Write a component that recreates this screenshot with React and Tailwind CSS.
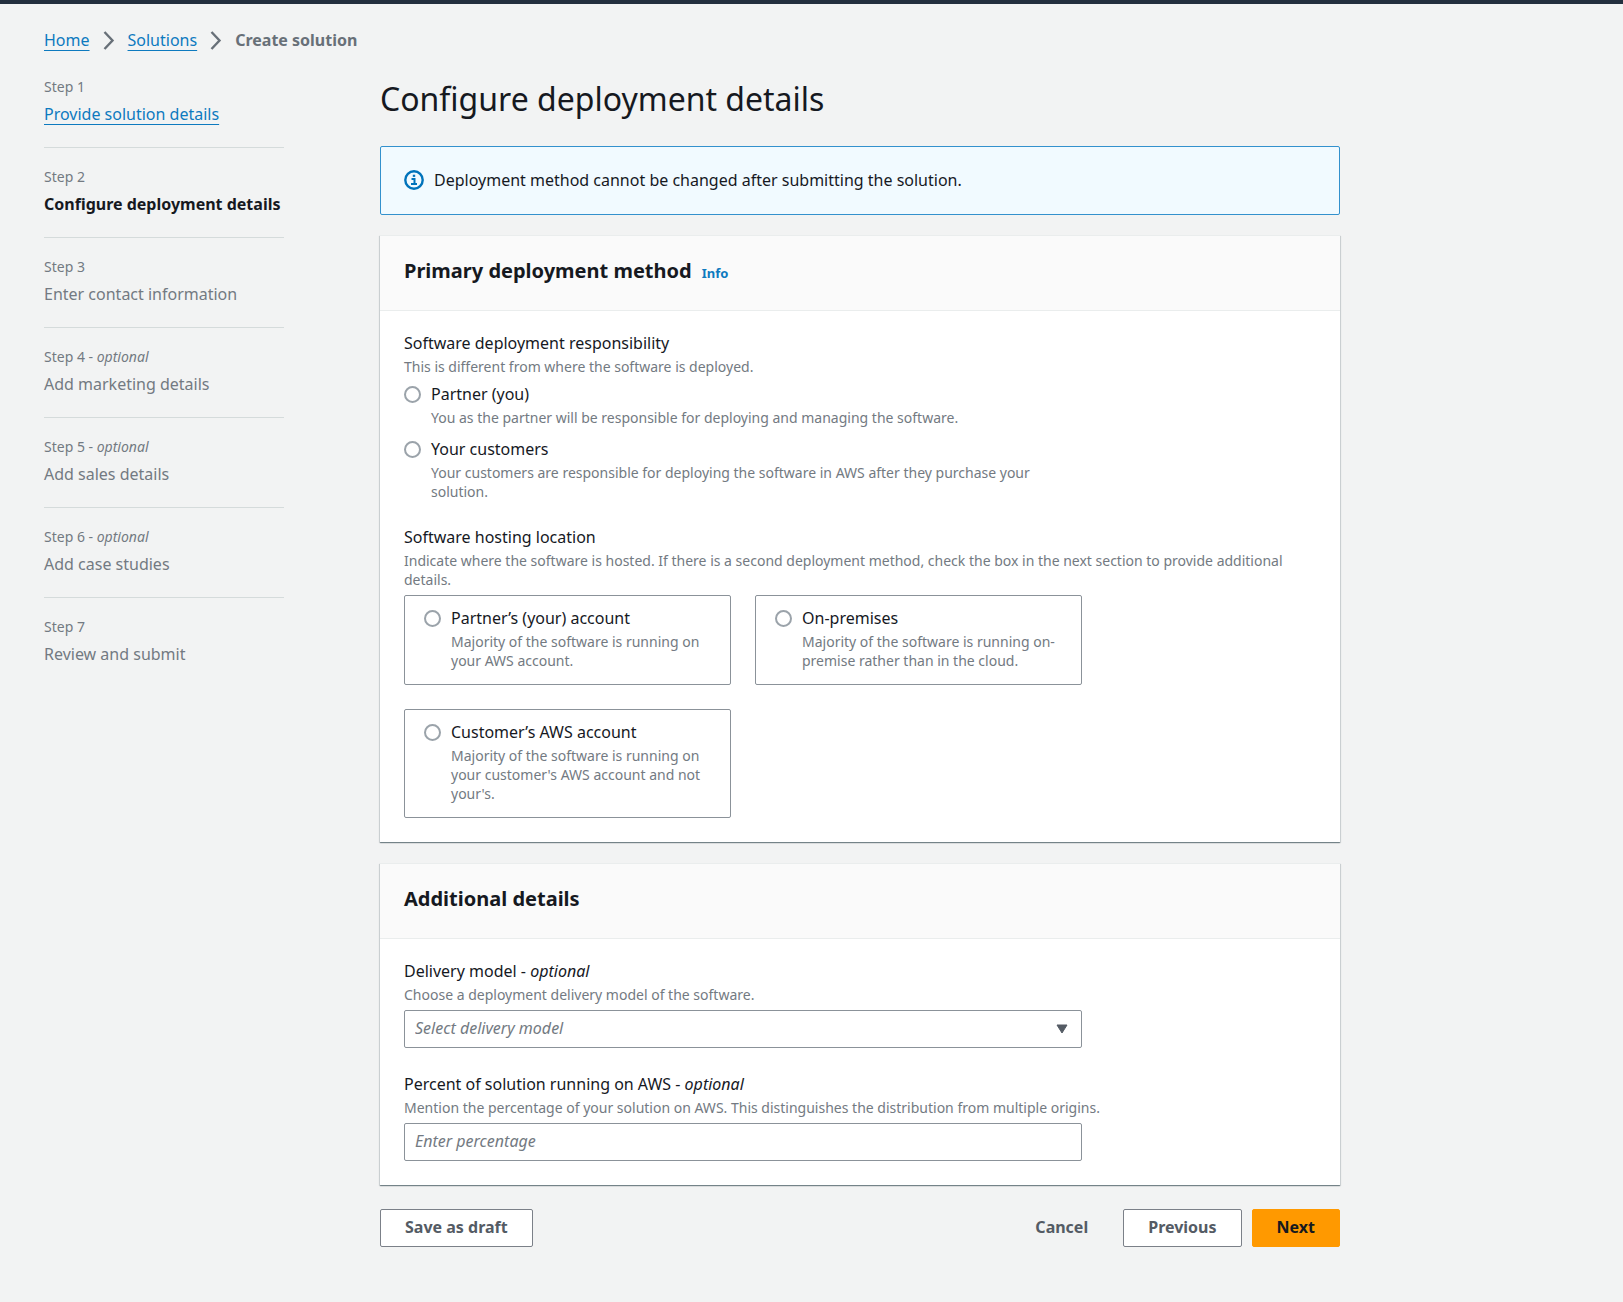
import React from "react";

const STEPS = [
  { title: "Provide solution details", state: "done" },
  { title: "Configure deployment details", state: "current" },
  { title: "Enter contact information" },
  { title: "Add marketing details", optional: true },
  { title: "Add sales details", optional: true },
  { title: "Add case studies", optional: true },
  { title: "Review and submit" },
];

const RESPONSIBILITY = [
  {
    id: "partner",
    label: "Partner (you)",
    hint: "You as the partner will be responsible for deploying and managing the software.",
  },
  {
    id: "customers",
    label: "Your customers",
    hint: "Your customers are responsible for deploying the software in AWS after they purchase your solution.",
  },
];

const LOCATIONS = [
  {
    id: "partner-account",
    label: "Partner’s (your) account",
    hint: "Majority of the software is running on your AWS account.",
  },
  {
    id: "on-premises",
    label: "On-premises",
    hint: "Majority of the software is running on-premise rather than in the cloud.",
  },
  {
    id: "customer-account",
    label: "Customer’s AWS account",
    hint: "Majority of the software is running on your customer's AWS account and not your's.",
  },
];

const linkClass = "text-[#0d7abf] underline decoration-1 underline-offset-4";
const hintClass = "text-sm leading-[19px] text-[#737a82]";

function Chevron() {
  return (
    <svg className="h-5 w-3" viewBox="0 0 12 20" fill="none" stroke="#687078" strokeWidth="2.4" aria-hidden="true">
      <path d="M1.500 2l8 8.500-8 8.500" />
    </svg>
  );
}

function InfoIcon() {
  return (
    <svg className="size-5 shrink-0" viewBox="0 0 20 20" fill="none" stroke="#0073bb" aria-hidden="true">
      <circle cx="10" cy="10" r="8.700" strokeWidth="2.400" />
      <path d="M7.500 9h3v5M7 14.100h6" strokeWidth="2" />
      <path d="M8.800 5.800h2.400" strokeWidth="2.200" />
    </svg>
  );
}

function Breadcrumbs() {
  return (
    <nav aria-label="Breadcrumbs">
      <ol className="flex items-center gap-[13px] leading-6">
        <li><a href="#home" className={linkClass}>Home</a></li>
        <li><Chevron /></li>
        <li><a href="#solutions" className={linkClass}>Solutions</a></li>
        <li><Chevron /></li>
        <li className="font-bold text-[#687078]">Create solution</li>
      </ol>
    </nav>
  );
}

function Steps() {
  return (
    <nav aria-label="Steps" className="w-60 shrink-0">
      <ol className="divide-y divide-[#d5dbdb]">
        {STEPS.map((step, i) => (
          <li key={step.title} className="pt-[17px] pb-[18px] first:pt-0">
            <div className="text-sm leading-6 text-[#737a82]">
              Step {i + 1}
              {step.optional && <> - <i>optional</i></>}
            </div>
            <div className="leading-[30px] whitespace-nowrap">
              {step.state === "done" && <a href="#step-1" className={linkClass}>{step.title}</a>}
              {step.state === "current" && <span className="font-bold">{step.title}</span>}
              {!step.state && <span className="text-[#737a82]">{step.title}</span>}
            </div>
          </li>
        ))}
      </ol>
    </nav>
  );
}

function Container({ title, info, children }) {
  return (
    <section className="bg-white shadow-[0_1px_1px_rgba(0,28,36,0.4),1px_1px_1px_rgba(0,28,36,0.1),-1px_1px_1px_rgba(0,28,36,0.1)]">
      <header className="flex items-baseline gap-[10px] border-y border-[#eaeded] bg-[#fafafa] px-6 pt-[21px] pb-[25px]">
        <h2 className="text-xl leading-7 font-bold">{title}</h2>
        {info && <a href="#info" className="text-[13px] font-bold text-[#0d7abf]">Info</a>}
      </header>
      <div className="flex flex-col gap-6 px-6 pt-5 pb-6">{children}</div>
    </section>
  );
}

function Radio({ name, option }) {
  return (
    <>
      <input
        type="radio"
        id={option.id}
        name={name}
        className="mt-1 size-[17px] shrink-0 appearance-none rounded-full border-2 border-[#9ba3aa] bg-white checked:border-[5px] checked:border-[#0073bb]"
      />
      <label htmlFor={option.id}>
        <span className="block leading-6">{option.label}</span>
        <span className={"mt-0.5 block " + hintClass}>{option.hint}</span>
      </label>
    </>
  );
}

function FieldText({ label, optional, hint }) {
  return (
    <>
      <span className="block leading-6">
        {label}
        {optional && <> - <i>optional</i></>}
      </span>
      <span className={"mt-0.5 block " + hintClass}>{hint}</span>
    </>
  );
}

const controlClass =
  "h-[38px] w-full appearance-none rounded-xs border border-[#8b9299] bg-white px-[10px] pb-0.5 italic text-[#737a82] placeholder:text-[#737a82]";
const buttonClass = "h-[38px] rounded-xs border px-6 pb-0.5 font-bold";

export default function App() {
  return (
    <div className="min-h-screen border-t-4 border-[#232f3e] bg-[#f2f3f3] px-11 pt-6 pb-[52px] font-['Noto_Sans','Open_Sans',sans-serif] text-base text-[#16191f]">
      <Breadcrumbs />
      <div className="mt-[23px] flex gap-24">
        <Steps />
        <main className="max-w-[960px] min-w-0 flex-1">
          <h1 className="pt-1 text-[32px] leading-10">Configure deployment details</h1>

          <div role="status" className="mt-[27px] flex items-center gap-[10px] rounded-xs border border-[#3391cd] bg-[#f1faff] px-[23px] pt-[21px] pb-[22px] leading-6">
            <InfoIcon />
            <p>Deployment method cannot be changed after submitting the solution.</p>
          </div>

          <div className="mt-5 flex flex-col gap-[21px]">
            <Container title="Primary deployment method" info>
              <fieldset>
                <legend>
                  <FieldText label="Software deployment responsibility" hint="This is different from where the software is deployed." />
                </legend>
                <div className="mt-1.5 flex w-3/4 flex-col gap-[10px]">
                  {RESPONSIBILITY.map((option) => (
                    <div key={option.id} className="flex gap-[10px]">
                      <Radio name="responsibility" option={option} />
                    </div>
                  ))}
                </div>
              </fieldset>
              <fieldset>
                <legend>
                  <FieldText
                    label="Software hosting location"
                    hint="Indicate where the software is hosted. If there is a second deployment method, check the box in the next section to provide additional details."
                  />
                </legend>
                <div className="mt-1.5 grid grid-cols-12 items-start gap-6">
                  <div className="col-span-9 grid grid-cols-2 gap-6">
                    {LOCATIONS.map((option) => (
                      <div key={option.id} className="flex gap-[10px] rounded-xs border border-[#8b9299] pt-[10px] pr-5 pb-[14px] pl-[19px]">
                        <Radio name="location" option={option} />
                      </div>
                    ))}
                  </div>
                </div>
              </fieldset>
            </Container>

            <Container title="Additional details">
              <div>
                <label htmlFor="delivery-model">
                  <FieldText label="Delivery model" optional hint="Choose a deployment delivery model of the software." />
                </label>
                <div className="mt-1.5 grid grid-cols-12 gap-6">
                  <div className="relative col-span-9">
                    <select id="delivery-model" className={controlClass} defaultValue="">
                      <option value="">Select delivery model</option>
                    </select>
                    <svg className="pointer-events-none absolute top-[14px] right-[14px] h-[10px] w-3" viewBox="0 0 12 10" fill="#545b64" stroke="#545b64" strokeLinejoin="round" aria-hidden="true">
                      <path d="M1 1h10L6 9z" />
                    </svg>
                  </div>
                </div>
              </div>
              <div>
                <label htmlFor="percentage">
                  <FieldText
                    label="Percent of solution running on AWS"
                    optional
                    hint="Mention the percentage of your solution on AWS. This distinguishes the distribution from multiple origins."
                  />
                </label>
                <div className="mt-1.5 grid grid-cols-12 gap-6">
                  <div className="col-span-9">
                    <input id="percentage" type="text" placeholder="Enter percentage" className={controlClass} />
                  </div>
                </div>
              </div>
            </Container>
          </div>

          <div className="mt-6 flex items-center justify-between">
            <button type="button" className={buttonClass + " border-[#7b8088] bg-white text-[#545b64]"}>Save as draft</button>
            <div className="flex gap-[10px]">
              <button type="button" className={buttonClass + " border-transparent text-[#545b64]"}>Cancel</button>
              <button type="button" className={buttonClass + " border-[#7b8088] bg-white text-[#545b64]"}>Previous</button>
              <button type="button" className={buttonClass + " border-[#ff9900] bg-[#ff9900] text-[#16191f]"}>Next</button>
            </div>
          </div>
        </main>
      </div>
    </div>
  );
}
